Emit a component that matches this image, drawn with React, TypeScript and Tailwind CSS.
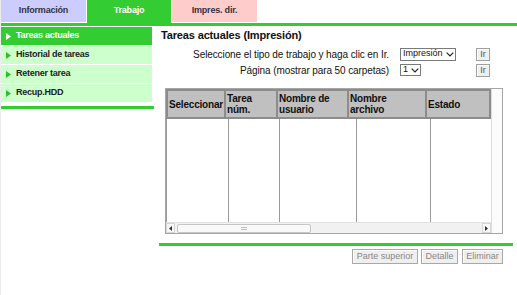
import React from "react";

const navItems = ["Tareas actuales", "Historial de tareas", "Retener tarea", "Recup.HDD"];

const headCols = [
  { label: ["Seleccionar"], w: "w-[56px]" },
  { label: ["Tarea", "núm."], w: "w-[52px]" },
  { label: ["Nombre de", "usuario"], w: "w-[71px]" },
  { label: ["Nombre", "archivo"], w: "w-[78px]" },
  { label: ["Estado"], w: "flex-1" },
];

const bodyCols = ["w-[62px]", "w-[51px]", "w-[77px]", "w-[74px]", "flex-1"];

const Chevron = () => (
  <svg width="8" height="5" viewBox="0 0 8 5" className="ml-[3px] shrink-0">
    <path d="M0.7 0.7 L4 4 L7.3 0.7" stroke="#222" strokeWidth="1.2" fill="none" />
  </svg>
);

const GrayButton = ({ label, className }: { label: string; className: string }) => (
  <button
    className={`${className} block h-[15px] whitespace-nowrap border border-[#a8a8a8] bg-[#efefef] text-[9px] leading-[13px] text-[#888] shadow-[inset_1px_1px_0_#fff]`}
  >
    {label}
  </button>
);

const IrButton = () => (
  <button className="w-[14px] h-[13px] border border-[#a0a0a0] bg-[#efefef] text-[9px] leading-[11px] text-[#555] shadow-[inset_1px_1px_0_#fff]">
    Ir
  </button>
);

export default function App() {
  return (
    <div className="w-[517px] h-[295px] bg-white overflow-hidden border-l border-[#ececec] font-['Liberation_Sans',Arial,sans-serif]">
      {/* tabs */}
      <div className="flex items-start h-[23px]">
        <div className="w-[85px] h-[22px] bg-[#ccccff] flex items-center justify-center text-[9px] tracking-[-0.2px] font-bold text-[#333344]">
          Información
        </div>
        <div className="w-[84px] h-[23px] ml-[1px] bg-[#33cc33] flex items-center justify-center text-[9px] tracking-[-0.2px] font-bold text-white pb-[1px]">
          Trabajo
        </div>
        <div className="w-[85px] h-[22px] ml-[1px] bg-[#ffcccc] flex items-center justify-center text-[9px] tracking-[-0.2px] font-bold text-[#333344]">
          Impres. dir.
        </div>
      </div>
      <div className="h-[3px] bg-[#33cc33]" />

      <div className="flex pt-[1px]">
        {/* nav */}
        <div className="w-[153px]">
          <div className="flex flex-col gap-[1px] w-[151px]">
            {navItems.map((item, i) => (
              <div
                key={item}
                className={`h-[18px] flex items-center pl-[5px] text-[9px] tracking-[-0.25px] font-bold ${
                  i === 0 ? "bg-[#33cc33] text-white" : "bg-[#ccffcc] text-[#222]"
                }`}
              >
                <svg width="5" height="7" viewBox="0 0 5 7" className="mr-[5px] shrink-0">
                  <path d="M0 0 L5 3.5 L0 7 Z" fill={i === 0 ? "#ffffff" : "#33bb33"} />
                </svg>
                {item}
              </div>
            ))}
          </div>
          <div className="mt-[4px] h-[3px] bg-[#33cc33]" />
        </div>

        {/* content */}
        <div className="ml-[5px] w-[354px]">
          <div className="pl-[2px] pt-[2px] text-[11px] tracking-[-0.15px] font-bold text-[#111] leading-[13px]">
            Tareas actuales (Impresión)
          </div>

          <div className="mt-[5px] flex items-center h-[14px]">
            <div className="w-[230px] text-right text-[10px] tracking-[-0.1px] text-[#111]">
              Seleccione el tipo de trabajo y haga clic en Ir.
            </div>
            <div className="ml-[11px] w-[76px]">
              <div className="w-[56px] h-[13px] border border-[#7a7a7a] flex items-center pl-[2px] text-[9px] text-[#111]">
                Impresión
                <Chevron />
              </div>
            </div>
            <IrButton />
          </div>
          <div className="mt-[2px] flex items-center h-[14px]">
            <div className="w-[230px] text-right text-[10px] tracking-[-0.1px] text-[#111]">
              Página (mostrar para 50 carpetas)
            </div>
            <div className="ml-[11px] w-[76px]">
              <div className="w-[21px] h-[12px] border border-[#7a7a7a] flex items-center pl-[2px] text-[9px] text-[#111]">
                1
                <Chevron />
              </div>
            </div>
            <IrButton />
          </div>

          {/* table */}
          <div className="ml-[6px] mt-[11px] w-[338px] h-[146px] border border-[#a6a6a6] flex">
            <div className="w-[325px] flex flex-col">
              <div className="h-[30px] flex bg-[#c0c0c0] border-2 border-[#8c8c8c]">
                {headCols.map((c, i) => (
                  <div
                    key={c.label.join(" ")}
                    className={`${c.w} h-full flex flex-col justify-center px-[1px] text-[10px] tracking-[-0.2px] font-bold leading-[11px] text-[#111] ${
                      i > 0 ? "border-l-2 border-[#8c8c8c]" : ""
                    }`}
                  >
                    {c.label.map((l) => (
                      <span key={l}>{l}</span>
                    ))}
                  </div>
                ))}
              </div>
              <div className="flex flex-1">
                {bodyCols.map((w, i) => (
                  <div key={i} className={`${w} h-full border-l border-[#9a9a9a]`} />
                ))}
              </div>
              {/* horizontal scrollbar */}
              <div className="h-[11px] flex items-center bg-[#f1f1f1] border-t border-[#e2e2e2]">
                <div className="w-[9px] h-[10px] flex items-center justify-center border border-[#d6d6d6] bg-[#f7f7f7]">
                  <svg width="3" height="5" viewBox="0 0 3 5"><path d="M3 0 L0 2.5 L3 5 Z" fill="#333" /></svg>
                </div>
                <div className="ml-[2px] w-[134px] h-[9px] border border-[#c6c6c6] rounded-[2px] bg-[#f9f9f9] flex items-center justify-center">
                  <div className="w-[6px] h-[3px] border-y border-[#bdbdbd]" />
                </div>
                <div className="flex-1" />
                <div className="w-[9px] h-[10px] flex items-center justify-center border border-[#d6d6d6] bg-[#f7f7f7]">
                  <svg width="3" height="5" viewBox="0 0 3 5"><path d="M0 0 L3 2.5 L0 5 Z" fill="#333" /></svg>
                </div>
              </div>
            </div>
            <div className="flex-1 border-l border-[#dcdcdc] bg-[#fbfbfb]" />
          </div>

          <div className="mt-[9px] h-[3px] bg-[#33cc33]" />

          <div className="mt-[3px] flex items-start justify-end pr-[10px]">
            <GrayButton label="Parte superior" className="w-[66px]" />
            <GrayButton label="Detalle" className="w-[37px] ml-[3px]" />
            <GrayButton label="Eliminar" className="w-[41px] ml-[4px]" />
          </div>
        </div>
      </div>
    </div>
  );
}
